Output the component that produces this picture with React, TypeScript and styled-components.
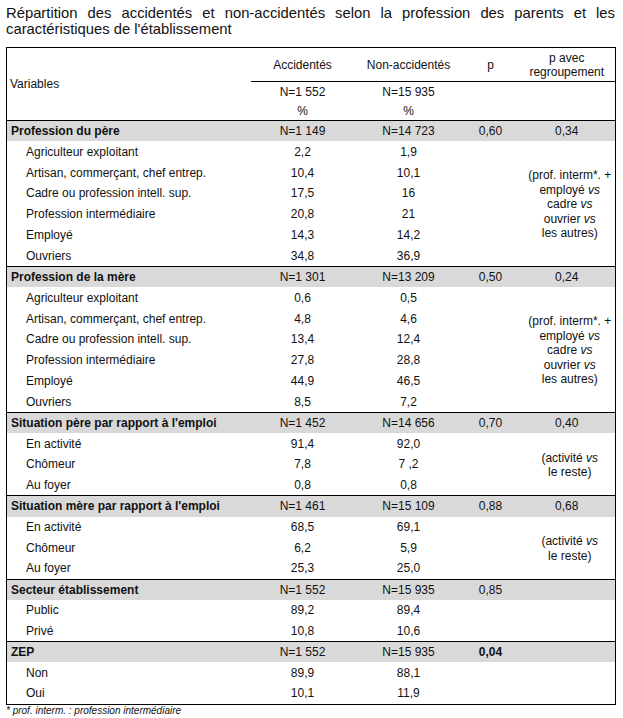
import React from "react";
import styled, { createGlobalStyle } from "styled-components";

const Global = createGlobalStyle`
  html, body { margin: 0; padding: 0; background: #fff; }
  body { font-family: "Liberation Sans", Arial, sans-serif; color: #111; }
`;

const Page = styled.div`
  width: 609px;
  padding: 5px 0 0 6px;
`;

const Title = styled.p`
  margin: 0;
  font-size: 14.8px;
  line-height: 16px;
  text-align: justify;
`;

const Table = styled.table`
  margin-top: 10px;
  width: 609px;
  table-layout: fixed;
  border-collapse: collapse;
  border: 1.5px solid #000;
  font-size: 12px;
`;

const HeadCell = styled.th<{ $line?: boolean; $left?: boolean }>`
  font-weight: normal;
  text-align: ${(p) => (p.$left ? "left" : "center")};
  padding: ${(p) => (p.$left ? "0 0 0 3px" : "0")};
  line-height: 14px;
  border-bottom: ${(p) => (p.$line ? "1px solid #000" : "none")};
`;

const HeadRow = styled.tr<{ $h: number; $bottom?: boolean }>`
  height: ${(p) => p.$h}px;
  border-bottom: ${(p) => (p.$bottom ? "1.5px solid #000" : "none")};
`;

const SectionRow = styled.tr`
  height: 20.85px;
  background: #d9d9d9;
  border-top: 1.2px solid #000;
`;

const ItemRow = styled.tr`
  height: 20.85px;
`;

const Label = styled.td<{ $bold?: boolean }>`
  padding: 0 0 0 ${(p) => (p.$bold ? "4px" : "19px")};
  font-weight: ${(p) => (p.$bold ? "bold" : "normal")};
  white-space: nowrap;
`;

const Val = styled.td<{ $bold?: boolean }>`
  text-align: center;
  padding: 0;
  font-weight: ${(p) => (p.$bold ? "bold" : "normal")};
`;

const Note = styled.td`
  text-align: center;
  vertical-align: middle;
  line-height: 14.5px;
  padding: 2px 0 0 6px;
`;

const Foot = styled.p`
  margin: 0;
  font-size: 10px;
  line-height: 11px;
  font-style: italic;
`;

type Item = [string, string, string];
type Section = {
  title: string;
  n1: string;
  n2: string;
  p: string;
  pBold?: boolean;
  pg: string;
  note?: React.ReactNode;
  items: Item[];
};

const profNote = (
  <>
    (prof. interm*. +<br />
    employé <i>vs</i>
    <br />
    cadre <i>vs</i>
    <br />
    ouvrier <i>vs</i>
    <br />
    les autres)
  </>
);

const actNote = (
  <>
    (activité <i>vs</i>
    <br />
    le reste)
  </>
);

const profItems = (v: string[][]): Item[] =>
  [
    "Agriculteur exploitant",
    "Artisan, commerçant, chef entrep.",
    "Cadre ou profession intell. sup.",
    "Profession intermédiaire",
    "Employé",
    "Ouvriers",
  ].map((l, i) => [l, v[i][0], v[i][1]]);

const sections: Section[] = [
  {
    title: "Profession du père",
    n1: "N=1 149",
    n2: "N=14 723",
    p: "0,60",
    pg: "0,34",
    note: profNote,
    items: profItems([
      ["2,2", "1,9"],
      ["10,4", "10,1"],
      ["17,5", "16"],
      ["20,8", "21"],
      ["14,3", "14,2"],
      ["34,8", "36,9"],
    ]),
  },
  {
    title: "Profession de la mère",
    n1: "N=1 301",
    n2: "N=13 209",
    p: "0,50",
    pg: "0,24",
    note: profNote,
    items: profItems([
      ["0,6", "0,5"],
      ["4,8", "4,6"],
      ["13,4", "12,4"],
      ["27,8", "28,8"],
      ["44,9", "46,5"],
      ["8,5", "7,2"],
    ]),
  },
  {
    title: "Situation père par rapport à l'emploi",
    n1: "N=1 452",
    n2: "N=14 656",
    p: "0,70",
    pg: "0,40",
    note: actNote,
    items: [
      ["En activité", "91,4", "92,0"],
      ["Chômeur", "7,8", "7 ,2"],
      ["Au foyer", "0,8", "0,8"],
    ],
  },
  {
    title: "Situation mère par rapport à l'emploi",
    n1: "N=1 461",
    n2: "N=15 109",
    p: "0,88",
    pg: "0,68",
    note: actNote,
    items: [
      ["En activité", "68,5", "69,1"],
      ["Chômeur", "6,2", "5,9"],
      ["Au foyer", "25,3", "25,0"],
    ],
  },
  {
    title: "Secteur établissement",
    n1: "N=1 552",
    n2: "N=15 935",
    p: "0,85",
    pg: "",
    items: [
      ["Public", "89,2", "89,4"],
      ["Privé", "10,8", "10,6"],
    ],
  },
  {
    title: "ZEP",
    n1: "N=1 552",
    n2: "N=15 935",
    p: "0,04",
    pBold: true,
    pg: "",
    items: [
      ["Non", "89,9", "88,1"],
      ["Oui", "10,1", "11,9"],
    ],
  },
];

export default function App() {
  return (
    <Page>
      <Global />
      <Title>
        Répartition des accidentés et non-accidentés selon la profession des
        parents et les caractéristiques de l'établissement
      </Title>
      <Table>
        <colgroup>
          <col style={{ width: 244 }} />
          <col style={{ width: 104 }} />
          <col style={{ width: 108 }} />
          <col style={{ width: 56 }} />
          <col style={{ width: 97 }} />
        </colgroup>
        <thead>
          <HeadRow $h={34}>
            <HeadCell $left rowSpan={3}>
              Variables
            </HeadCell>
            <HeadCell $line>Accidentés</HeadCell>
            <HeadCell $line>Non-accidentés</HeadCell>
            <HeadCell $line>p</HeadCell>
            <HeadCell $line>
              p avec
              <br />
              regroupement
            </HeadCell>
          </HeadRow>
          <HeadRow $h={20}>
            <HeadCell>N=1 552</HeadCell>
            <HeadCell>N=15 935</HeadCell>
            <HeadCell />
            <HeadCell />
          </HeadRow>
          <HeadRow $h={19} $bottom>
            <HeadCell>%</HeadCell>
            <HeadCell>%</HeadCell>
            <HeadCell />
            <HeadCell />
          </HeadRow>
        </thead>
        <tbody>
          {sections.map((s) => (
            <React.Fragment key={s.title}>
              <SectionRow>
                <Label $bold>{s.title}</Label>
                <Val>{s.n1}</Val>
                <Val>{s.n2}</Val>
                <Val $bold={s.pBold}>{s.p}</Val>
                <Val>{s.pg}</Val>
              </SectionRow>
              {s.items.map((it, i) => (
                <ItemRow key={it[0]}>
                  <Label>{it[0]}</Label>
                  <Val>{it[1]}</Val>
                  <Val>{it[2]}</Val>
                  <Val />
                  {i === 0 && <Note rowSpan={s.items.length}>{s.note}</Note>}
                </ItemRow>
              ))}
            </React.Fragment>
          ))}
        </tbody>
      </Table>
      <Foot>* prof. interm. : profession intermédiaire</Foot>
    </Page>
  );
}
